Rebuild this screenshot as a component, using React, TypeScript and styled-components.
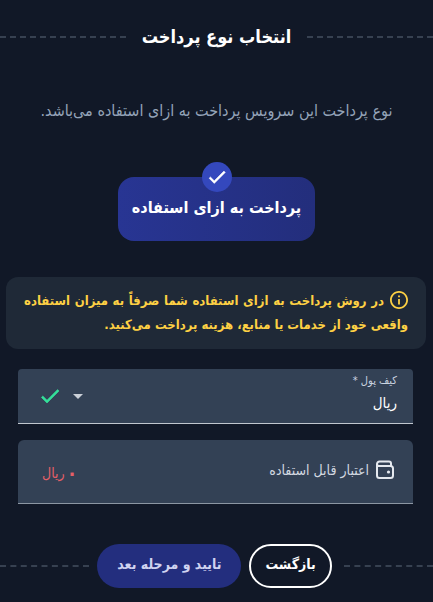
import React from "react";
import styled, { createGlobalStyle } from "styled-components";

const GlobalStyle = createGlobalStyle`
  *, *::before, *::after { box-sizing: border-box; }
  body { margin: 0; background: #111827; }
  body, button, select { font-family: "DejaVu Sans Condensed", "DejaVu Sans", sans-serif; font-stretch: condensed; }
`;

const Page = styled.main`
  padding: 17px 0 12px;
  color: #fff;
`;

const RuledRow = styled.div`
  display: flex;
  align-items: center;
`;

const Rule = styled.span`
  flex: 1;
  border-top: 2px dashed #374151;
`;

const Title = styled.h1`
  margin: 0 16px;
  font-size: 18px;
  line-height: 40px;
  font-weight: 700;
`;

const Intro = styled.p`
  margin: 40px 16px 0;
  text-align: center;
  font-size: 16px;
  line-height: 28px;
  color: #94a3b8;
`;

const PlanRow = styled.div`
  display: flex;
  justify-content: center;
  margin-top: 52px;
`;

const Plan = styled.button`
  position: relative;
  height: 64px;
  padding: 0 14px 4px;
  border: 0;
  border-radius: 16px;
  background: linear-gradient(to right, #283593, #232e7c);
  color: #fff;
  font-size: 16px;
  font-weight: 700;
`;

const PlanBadge = styled.span`
  position: absolute;
  top: -15px;
  left: 50%;
  margin-left: -15px;
  width: 30px;
  height: 30px;
  border-radius: 50%;
  background: #3448bd;
  display: flex;
  align-items: center;
  justify-content: center;
`;

const Notice = styled.p`
  margin: 36px 7px 0 6px;
  padding: 12px 18px;
  border-radius: 12px;
  background: #1f2937;
  color: #fdd044;
  font-size: 13px;
  line-height: 24px;
  font-weight: 700;
  text-align: justify;

  svg { vertical-align: middle; margin-left: 6px; margin-top: -4px; }
`;

const Fields = styled.div`
  display: flex;
  flex-direction: column;
  gap: 16px;
  margin: 20px 20px 0 18px;
`;

const WalletField = styled.div`
  position: relative;
  display: flex;
  align-items: center;
  height: 55px;
  border-radius: 4px 4px 0 0;
  border-bottom: 1px solid #c0c6ce;
  background: #334155;
`;

const FieldLabel = styled.label`
  position: absolute;
  top: 4px;
  right: 16px;
  font-size: 11px;
  line-height: 16px;
  color: #cbd5e1;
`;

const WalletSelect = styled.select`
  flex: 1;
  align-self: stretch;
  appearance: none;
  border: 0;
  padding: 14px 16px 0;
  background: transparent;
  color: #fff;
  font-size: 15px;
  direction: rtl;
`;

const FieldMarks = styled.span`
  display: flex;
  align-items: center;
  gap: 4px;
  padding-left: 20px;
  pointer-events: none;
`;

const CreditField = styled.div`
  display: flex;
  align-items: center;
  justify-content: space-between;
  height: 64px;
  padding: 0 18px 4px 24px;
  border-radius: 6px 6px 0 0;
  border-bottom: 1px solid #8c96a3;
  background: #334155;
  font-size: 14px;
  line-height: 24px;
`;

const CreditLabel = styled.span`
  display: flex;
  align-items: center;
  gap: 6px;
  color: #d3d9e1;
`;

const CreditValue = styled.span`
  display: flex;
  align-items: center;
  gap: 2px;
  padding-top: 6px;
  color: #e45f67;
`;

const Amount = styled.b`
  font-size: 20px;
`;

const Actions = styled(RuledRow)`
  margin-top: 40px;
`;

const ActionGroup = styled.div`
  display: flex;
  gap: 8px;
  margin: 0 12px 0 8px;
`;

const ActionButton = styled.button<{ $primary?: boolean }>`
  height: 44px;
  padding: 0 ${(p) => (p.$primary ? 20 : 14)}px 4px;
  border: ${(p) => (p.$primary ? "0" : "2px solid #fff")};
  border-radius: 22px;
  background: ${(p) => (p.$primary ? "#232e7e" : "transparent")};
  color: ${(p) => (p.$primary ? "#cfd3f0" : "#fff")};
  font-size: 14px;
  font-weight: 700;
`;

const Check = ({ size, color }: { size: number; color: string }) => (
  <svg width={size} height={size} viewBox="0 0 24 24" fill={color} stroke={color} strokeWidth="0.6" aria-hidden="true">
    <path d="M9 16.17 4.83 12l-1.42 1.41L9 19 21 7l-1.41-1.41z" />
  </svg>
);

const InfoIcon = () => (
  <svg width="18" height="18" viewBox="2 2 20 20" fill="currentColor" aria-hidden="true">
    <path d="M11 7h2v2h-2zm0 4h2v6h-2zm1-9C6.48 2 2 6.48 2 12s4.48 10 10 10 10-4.48 10-10S17.52 2 12 2m0 18c-4.41 0-8-3.59-8-8s3.59-8 8-8 8 3.59 8 8-3.59 8-8 8" />
  </svg>
);

const WalletIcon = () => (
  <svg width="20" height="20" viewBox="0 0 20 20" fill="none" stroke="#e5e9ef" strokeWidth="2" aria-hidden="true">
    <path d="M2 4v11.5A2.5 2.5 0 0 0 4.500 18h11a2.500 2.500 0 0 0 2.500-2.500V8.500A2.500 2.500 0 0 0 15.500 6H4a2 2 0 0 1-2-2 2.500 2.500 0 0 1 2.500-2.500H14a2 2 0 0 1 2 2V6" />
    <circle cx="13.5" cy="12" r="1.6" fill="#e5e9ef" stroke="none" />
  </svg>
);

export default function App() {
  return (
    <>
      <GlobalStyle />
      <Page dir="rtl" lang="fa">
        <RuledRow>
          <Rule />
          <Title>انتخاب نوع پرداخت</Title>
          <Rule />
        </RuledRow>
        <Intro>نوع پرداخت این سرویس پرداخت به ازای استفاده می‌باشد.</Intro>
        <PlanRow>
          <Plan type="button" aria-pressed="true">
            <PlanBadge>
              <Check size={22} color="#fff" />
            </PlanBadge>
            پرداخت به ازای استفاده
          </Plan>
        </PlanRow>
        <Notice>
          <InfoIcon />
          در روش پرداخت به ازای استفاده شما صرفاً به میزان استفاده واقعی خود از خدمات یا منابع، هزینه پرداخت می‌کنید.
        </Notice>
        <Fields>
          <WalletField>
            <FieldLabel htmlFor="wallet">کیف پول *</FieldLabel>
            <WalletSelect id="wallet" required defaultValue="rial">
              <option value="rial">ریال</option>
            </WalletSelect>
            <FieldMarks>
              <svg width="24" height="24" viewBox="0 0 24 24" fill="#cbd0d8" aria-hidden="true">
                <path d="m7 10 5 5 5-5z" />
              </svg>
              <Check size={24} color="#34e09a" />
            </FieldMarks>
          </WalletField>
          <CreditField>
            <CreditLabel>
              <WalletIcon />
              اعتبار قابل استفاده
            </CreditLabel>
            <CreditValue>
              <Amount>۰</Amount>
              <span>ریال</span>
            </CreditValue>
          </CreditField>
        </Fields>
        <Actions>
          <Rule />
          <ActionGroup>
            <ActionButton type="button">بازگشت</ActionButton>
            <ActionButton type="button" $primary>
              تایید و مرحله بعد
            </ActionButton>
          </ActionGroup>
          <Rule />
        </Actions>
      </Page>
    </>
  );
}
